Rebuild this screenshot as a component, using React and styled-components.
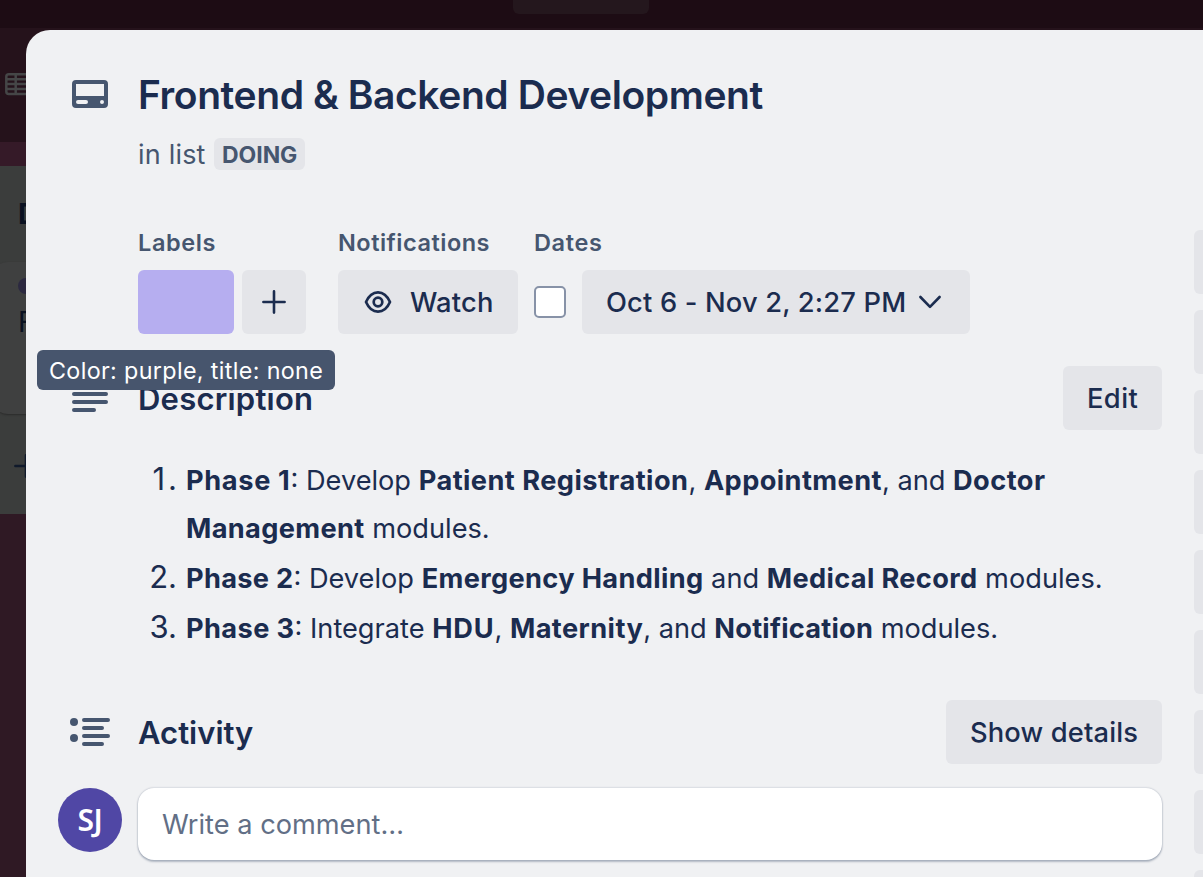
import React from "react";
import styled, { createGlobalStyle } from "styled-components";

const ink = "#1b2c4f";
const slate = "#46566f";
const fill = "#e4e5e9";

const Global = createGlobalStyle`
  * { box-sizing: border-box; }
  html, body { margin: 0; padding: 0; }
  body {
    width: 100%;
    height: 877px;
    overflow: hidden;
    font-family: Inter, "Liberation Sans", sans-serif;
    color: ${ink};
  }
  h1, h2, h3, p, ol { margin: 0; padding: 0; }
  button { border: 0; font: inherit; color: inherit; margin: 0; padding: 0; text-align: left; }
  svg { display: block; }
`;

const Screen = styled.div`
  position: relative;
  height: 877px;
  overflow: hidden;
  background: #2f1924;
`;

/* dimmed board behind the dialog */
const Board = styled.div`
  display: flex;
  flex-direction: column;
  height: 100%;
`;
const TopBar = styled.div`
  flex: 0 0 28px;
  padding-left: 513px;
  background: #1d0c14;
`;
const Search = styled.div`
  width: 136px;
  height: 14px;
  border-radius: 0 0 6px 6px;
  background: #24171d;
`;
const BoardBar = styled.div`
  flex: 0 0 114px;
  padding: 44px 0 0 4px;
  background: #25121b;
`;
const BoardGap = styled.div`
  flex: 0 0 24px;
  background: #351a28;
`;
const List = styled.div`
  flex: 0 0 348px;
  width: 300px;
  display: flex;
  flex-direction: column;
  background: #3b3d3c;
  color: #0a1120;
`;
const ListName = styled.h3`
  height: 96px;
  padding: 31px 0 0 18px;
  font-size: 28px;
  line-height: 34px;
  font-weight: 700;
`;
const ListCard = styled.div`
  height: 152px;
  margin-left: -8px;
  padding: 16px 0 0 26px;
  border-radius: 16px;
  background: #3f4040;
  box-shadow: 0 1px 2px #2a2b2b;
  font-size: 28px;
  line-height: 34px;
`;
const Dot = styled.div`
  width: 80px;
  height: 16px;
  margin-bottom: 11px;
  border-radius: 8px;
  background: #2c2940;
`;
const AddCard = styled.div`
  padding: 40px 0 0 14px;
`;

const Dialog = styled.section`
  position: absolute;
  top: 30px;
  left: 26px;
  width: 1400px;
  height: 900px;
  display: flex;
  gap: 32px;
  border-radius: 24px;
  background: #f0f1f3;
`;
const Main = styled.div`
  flex: 0 0 1136px;
  padding-top: 42px;
`;
const Sidebar = styled.div`
  flex: 1;
  display: flex;
  flex-direction: column;
  gap: 16px;
  padding-top: 200px;
`;
const SideButton = styled.button`
  flex: 0 0 64px;
  border-radius: 6px;
  background: ${fill};
`;

const Row = styled.div`
  display: grid;
  grid-template-columns: 112px 1fr auto;
  align-items: center;
  height: ${(p) => p.$h}px;
  margin-top: ${(p) => p.$gap || 0}px;
`;
const Gutter = styled.div`
  padding-left: ${(p) => p.$x}px;
  padding-bottom: ${(p) => p.$lift || 0}px;
`;
const Title = styled.h1`
  font-size: 39px;
  line-height: 46px;
  font-weight: 600;
  letter-spacing: ${(p) => p.$track}px;
  white-space: nowrap;
`;
const Heading = styled.h2`
  padding-top: 2px;
  font-size: 31px;
  line-height: 40px;
  font-weight: 600;
  letter-spacing: ${(p) => p.$track}px;
`;
const InList = styled.div`
  display: flex;
  align-items: center;
  height: 32px;
  margin: 20px 0 0 112px;
  font-size: 27px;
  color: ${slate};
`;
const ListLink = styled.p`
  width: 76px;
  letter-spacing: ${(p) => p.$track}px;
`;
const Tag = styled.span`
  height: 32px;
  width: 91px;
  padding: 1px 0 0 8px;
  border-radius: 6px;
  background: ${fill};
  font-size: 23px;
  line-height: 32px;
  font-weight: 700;
  letter-spacing: ${(p) => p.$track}px;
`;

const Meta = styled.div`
  display: flex;
  margin: 57px 0 0 112px;
`;
const Group = styled.div`
  width: ${(p) => p.$w}px;
`;
const GroupName = styled.h3`
  height: 32px;
  margin-bottom: 11px;
  font-size: 23.5px;
  line-height: 32px;
  font-weight: 600;
  color: ${slate};
  letter-spacing: ${(p) => p.$track}px;
`;
const Items = styled.div`
  display: flex;
  align-items: center;
  gap: ${(p) => p.$gap || 8}px;
`;
const Swatch = styled.div`
  width: 96px;
  height: 64px;
  border-radius: 6px;
  background: #b6aef0;
`;
const Button = styled.button`
  display: flex;
  align-items: center;
  width: ${(p) => p.$w}px;
  height: 64px;
  padding-left: ${(p) => p.$pad ?? 24}px;
  border-radius: 6px;
  background: ${fill};
  font-size: 27.3px;
  font-weight: 500;
  letter-spacing: ${(p) => p.$track || 0}px;
  white-space: nowrap;
  svg { flex: none; }
`;
const ButtonText = styled.span`
  width: ${(p) => p.$w}px;
`;
const Check = styled.div`
  width: 32px;
  height: 32px;
  border: 2px solid #8792a7;
  border-radius: 5px;
  background: #fff;
`;

const Phases = styled.ol`
  margin: 27px 0 0 160px;
  list-style: none;
  font-size: 27.2px;
  line-height: 48px;
`;
const Phase = styled.li`
  display: grid;
  grid-template-columns: 40px 1fr;
  align-items: baseline;
  margin: 0 0 2px -40px;
  white-space: nowrap;
`;
const Num = styled.span`
  padding-right: ${(p) => 9 - (p.$track || 0)}px;
  font-size: 31px;
  line-height: 40px;
  text-align: right;
  letter-spacing: ${(p) => p.$track || 0}px;
`;
const Strong = styled.strong`
  font-weight: 700;
  letter-spacing: ${(p) => p.$track ?? 0.35}px;
`;

const Compose = styled.div`
  display: flex;
  align-items: flex-start;
  gap: 16px;
  margin: 24px 0 0 32px;
`;
const Avatar = styled.div`
  width: 64px;
  height: 64px;
  border-radius: 50%;
  background: #5047a5;
  color: #fff;
  font-family: "Noto Sans", sans-serif;
  font-size: 30px;
  font-weight: 600;
  line-height: 63px;
  text-align: center;
  letter-spacing: -0.5px;
`;
const Comment = styled.div`
  width: 1024px;
  height: 72px;
  padding-left: 24px;
  border-radius: 16px;
  background: #fff;
  box-shadow: 0 2px 2px rgba(9, 30, 66, 0.25), 0 0 2px rgba(9, 30, 66, 0.31);
  color: #626f86;
  font-size: 27.2px;
  line-height: 74px;
  letter-spacing: ${(p) => p.$track}px;
`;
const Tooltip = styled.div`
  position: absolute;
  top: 350px;
  left: 37px;
  width: 298px;
  height: 40px;
  padding-left: 12px;
  border-radius: 6px;
  background: #47556d;
  color: #fff;
  font-size: 23.3px;
  line-height: 41px;
  letter-spacing: ${(p) => p.$track}px;
  white-space: nowrap;
`;

const TableIcon = () => (
  <svg width="36" height="24" viewBox="0 0 36 24" fill="none" stroke="#454647" strokeWidth="2.5">
    <rect x="2.3" y="2.3" width="32" height="19.6" rx="2.5" />
    <path d="M2 7.3H34M2 12.1H34M2 16.9H34M11.700 2V22" />
  </svg>
);
const CardIcon = () => (
  <svg width="36" height="28" viewBox="0 0 36 28">
    <path
      fill={slate}
      fillRule="evenodd"
      d="M4 0H32A4 4 0 0 1 36 4V24A4 4 0 0 1 32 28H4A4 4 0 0 1 0 24V4A4 4 0 0 1 4 0ZM4 4V16H32V4ZM6 20A2 2 0 0 0 6 24H14A2 2 0 0 0 14 20ZM30 20A2 2 0 0 0 30 24A2 2 0 0 0 30 20Z"
    />
  </svg>
);
const LinesIcon = () => (
  <svg width="36" height="28" viewBox="0 0 36 28" stroke={slate} strokeWidth="4" strokeLinecap="round">
    <path d="M2 2H34M2 10H34M2 18H34M2 26H22" />
  </svg>
);
const ActivityIcon = () => (
  <svg width="40" height="28" viewBox="0 0 40 28" stroke={slate} strokeWidth="4" strokeLinecap="round">
    <path d="M14 2H38M14 10H32M14 18H38M14 26H32" />
    <g fill={slate} stroke="none">
      <circle cx="4" cy="4" r="4" />
      <circle cx="4" cy="20" r="4" />
    </g>
  </svg>
);
const PlusIcon = ({ color = ink }) => (
  <svg width="24" height="24" viewBox="0 0 24 24" stroke={color} strokeWidth="2.6" strokeLinecap="round">
    <path d="M12 1.4V22.6M1.4 12H22.6" />
  </svg>
);
const EyeIcon = () => (
  <svg width="28" height="24" viewBox="0 0 28 24" fill="none" stroke={ink} strokeWidth="2.7">
    <path d="M2 12C4.800 5.600 9 2.300 14 2.300S23.200 5.600 26 12C23.200 18.400 19 21.700 14 21.700S4.800 18.400 2 12Z" strokeLinejoin="round" />
    <circle cx="14" cy="12" r="4.300" />
  </svg>
);
const ChevronIcon = () => (
  <svg width="24" height="16" viewBox="0 0 24 16" fill="none" stroke={ink} strokeWidth="2.600" strokeLinecap="round" strokeLinejoin="round">
    <path d="M2.400 3L12 12.800L21.600 3" />
  </svg>
);

export default function App() {
  return (
    <Screen>
      <Global />
      <Board>
        <TopBar><Search /></TopBar>
        <BoardBar><TableIcon /></BoardBar>
        <BoardGap />
        <List>
          <ListName>D</ListName>
          <ListCard>
            <Dot />
            F
          </ListCard>
          <AddCard><PlusIcon color="#101a2b" /></AddCard>
        </List>
      </Board>

      <Dialog>
        <Main>
          <Row $h={46}>
            <Gutter $x={46} $lift={2}><CardIcon /></Gutter>
            <Title $track={-0.42}>Frontend &amp; Backend Development</Title>
          </Row>
          <InList>
            <ListLink $track={0.2}>in list</ListLink>
            <Tag $track={-0.05}>DOING</Tag>
          </InList>

          <Meta>
            <Group $w={200}>
              <GroupName $track={0.6}>Labels</GroupName>
              <Items>
                <Swatch />
                <Button $w={64} $pad={20} aria-label="Add label"><PlusIcon /></Button>
              </Items>
            </Group>
            <Group $w={196}>
              <GroupName $track={0.5}>Notifications</GroupName>
              <Button $w={180} $pad={26} $track={0.2}>
                <ButtonText $w={46}><EyeIcon /></ButtonText>
                Watch
              </Button>
            </Group>
            <Group $w={436}>
              <GroupName $track={0.65}>Dates</GroupName>
              <Items $gap={16}>
                <Check />
                <Button $w={388} $track={0.17}>
                  <ButtonText $w={312}>Oct 6 - Nov 2, 2:27 PM</ButtonText>
                  <ChevronIcon />
                </Button>
              </Items>
            </Group>
          </Meta>

          <Row $h={64} $gap={32}>
            <Gutter $x={46}><LinesIcon /></Gutter>
            <Heading $track={0.22}>Description</Heading>
            <Button $w={99} $track={0.4}>Edit</Button>
          </Row>
          <Phases>
            <Phase>
              <Num $track={3}>1.</Num>
              <div>
                <Strong $track={0.65}>Phase 1</Strong>: Develop <Strong $track={0.45}>Patient Registration</Strong>, <Strong $track={0.42}>Appointment</Strong>, and <Strong $track={0.45}>Doctor</Strong>
                <br />
                <Strong>Management</Strong> modules.
              </div>
            </Phase>
            <Phase>
              <Num>2.</Num>
              <div>
                <Strong $track={0.3}>Phase 2</Strong>: Develop <Strong>Emergency Handling</Strong> and <Strong>Medical Record</Strong> modules.
              </div>
            </Phase>
            <Phase>
              <Num>3.</Num>
              <div>
                <Strong $track={0.4}>Phase 3</Strong>: Integrate <Strong $track={0.8}>HDU</Strong>, <Strong $track={0.42}>Maternity</Strong>, and <Strong $track={0.22}>Notification</Strong> modules.
              </div>
            </Phase>
          </Phases>

          <Row $h={64} $gap={47}>
            <Gutter $x={44}><ActivityIcon /></Gutter>
            <Heading $track={0}>Activity</Heading>
            <Button $w={216} $track={0.16}>Show details</Button>
          </Row>
          <Compose>
            <Avatar>SJ</Avatar>
            <Comment $track={0}>Write a comment…</Comment>
          </Compose>
        </Main>
        <Sidebar>
          {[0, 1, 2, 3, 4, 5, 6, 7, 8].map((i) => (
            <SideButton key={i} />
          ))}
        </Sidebar>
      </Dialog>
      <Tooltip $track={0.35}>Color: purple, title: none</Tooltip>
    </Screen>
  );
}
